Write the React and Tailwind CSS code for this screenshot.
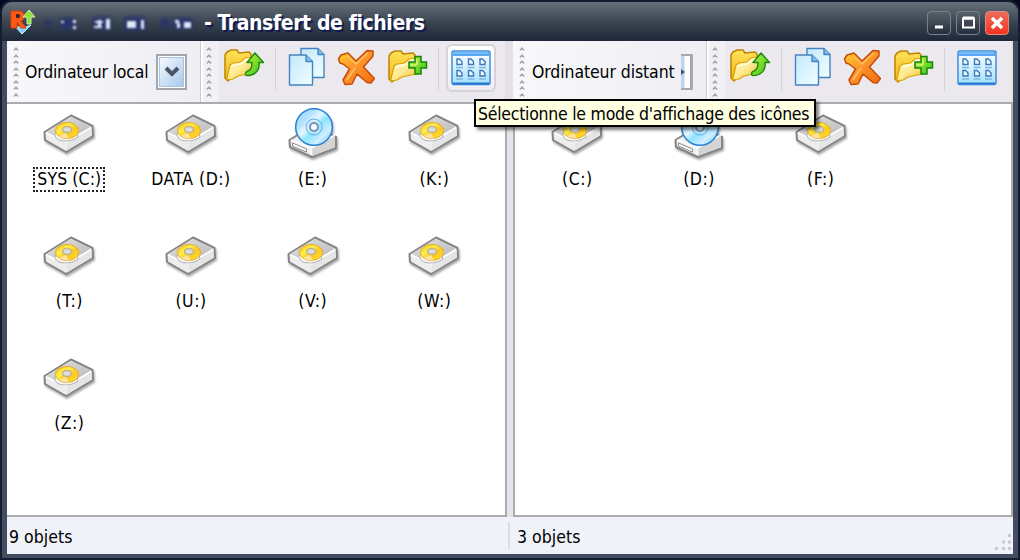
import React from 'react';

const LOCAL_DRIVES = [
    { name: 'SYS (C:)', selected: true },
    { name: 'DATA (D:)' },
    { name: '(E:)', type: 'cd' },
    { name: '(K:)' },
    { name: '(T:)' },
    { name: '(U:)' },
    { name: '(V:)' },
    { name: '(W:)' },
    { name: '(Z:)' },
];

const REMOTE_DRIVES = [
    { name: '(C:)' },
    { name: '(D:)', type: 'cd' },
    { name: '(F:)' },
];

// One set of gradients shared by all the icons
function IconDefs() {
    return (
        <svg className="absolute w-0 h-0" aria-hidden="true">
            <defs>
                <linearGradient id="folder" x1="0" y1="0" x2="1" y2="1">
                    <stop offset="0" stopColor="#fff9c0" />
                    <stop offset=".5" stopColor="#fdea94" />
                    <stop offset="1" stopColor="#f2bc14" />
                </linearGradient>
                <linearGradient id="folderBack" x1="0" y1="0" x2="0" y2="1">
                    <stop offset="0" stopColor="#ffe25c" />
                    <stop offset="1" stopColor="#f0b414" />
                </linearGradient>
                <linearGradient id="green" x1="0" y1="0" x2="1" y2="1">
                    <stop offset="0" stopColor="#b8f03c" />
                    <stop offset="1" stopColor="#3cc41c" />
                </linearGradient>
                <linearGradient id="page" x1="0" y1="0" x2="1" y2="1">
                    <stop offset="0" stopColor="#c4e8fc" />
                    <stop offset="1" stopColor="#f0ffff" />
                </linearGradient>
                <linearGradient id="cross" x1="0" y1="0" x2="1" y2="1">
                    <stop offset="0" stopColor="#ffd21e" />
                    <stop offset=".4" stopColor="#ff9a30" />
                    <stop offset="1" stopColor="#f26a10" />
                </linearGradient>
                <linearGradient id="grid" x1="0" y1="0" x2="0" y2="1">
                    <stop offset="0" stopColor="#ffffff" />
                    <stop offset="1" stopColor="#a4e0ff" />
                </linearGradient>
                <linearGradient id="disc" x1="0" y1="0" x2="1" y2="1">
                    <stop offset="0" stopColor="#8ed0fc" />
                    <stop offset=".28" stopColor="#b4e2ff" />
                    <stop offset=".42" stopColor="#e6f6ff" />
                    <stop offset=".55" stopColor="#8ce4ff" />
                    <stop offset=".75" stopColor="#d2efff" />
                    <stop offset="1" stopColor="#5cbcf8" />
                </linearGradient>
                <linearGradient id="platter" x1="0" y1="0" x2="1" y2="1">
                    <stop offset="0" stopColor="#f8b800" />
                    <stop offset=".35" stopColor="#fff04a" />
                    <stop offset=".6" stopColor="#ffc81c" />
                    <stop offset="1" stopColor="#ffe43c" />
                </linearGradient>
                <linearGradient id="metal" x1="0" y1="0" x2="1" y2="1">
                    <stop offset="0" stopColor="#e2e2e2" />
                    <stop offset="1" stopColor="#b4b4b4" />
                </linearGradient>
            </defs>
        </svg>
    );
}

function Folder() {
    return (
        <>
            <path d="M2 31V8l2-3 4-2h6l2 3 10-1 2 2v6L5 34z" fill="url(#folderBack)" stroke="#bd8502" strokeWidth="1.500" strokeLinejoin="round" />
            <path d="M3.500 33 7 18l3-2 8-1 4-4 9-1-2 16-14 3-5 3z" fill="url(#folder)" stroke="#dca000" strokeWidth="1.200" strokeLinejoin="round" />
            <path d="M8.500 19l10-2.500 4-3.500 5-1" fill="none" stroke="#fffbd8" strokeWidth="2" />
        </>
    );
}

function FolderUpIcon() {
    return (
        <svg width="42" height="38" viewBox="0 0 42 38">
            <Folder />
            <path d="M32 6 40.500 15.500H36c1 7-3 13-12 13-2 0-2-3 0-4 4-1 5-4 5-9h-5z" fill="url(#green)" stroke="#238a10" strokeWidth="1.500" strokeLinejoin="round" />
        </svg>
    );
}

function FolderPlusIcon() {
    return (
        <svg width="42" height="38" viewBox="0 0 42 38">
            <Folder />
            <path d="M28 8.500h6v5.500h5.500v6H34v6h-6v-6h-6v-6h6z" fill="url(#green)" stroke="#15860b" strokeWidth="1.500" />
            <path d="M29.500 17h-6M30 11v6" stroke="#d8f870" strokeWidth="1.500" />
        </svg>
    );
}

function CopyIcon() {
    return (
        <svg width="38" height="40" viewBox="0 0 38 40">
            <g fill="url(#page)" stroke="#4583c0" strokeWidth="1.400" strokeLinejoin="round">
                <path d="M13 1.500h17l6 6v23H13z" />
                <path d="M30 1.500v6h6" fill="#84c0ec" />
                <path d="M1.500 8h16.500l6.500 6.500V38h-23z" />
                <path d="M18 8v6.500h6.500" fill="#84c0ec" />
            </g>
        </svg>
    );
}

function DeleteIcon() {
    return (
        <svg width="38" height="38" viewBox="0 0 38 38">
            <path d="M1.500 10 4 6l7-2 8 8L30 1.500l6 .5v5L26.500 18 37.500 29.500 34 34l-4-.5L20 25l-5 10-7 .5-2-4.500 6.500-11L6 15l-3-1z" fill="url(#cross)" stroke="#c84a08" strokeWidth="1.500" strokeLinejoin="round" />
            <path d="M10 7l9 8L31 4M10 31l8-12" fill="none" stroke="#ffc060" strokeWidth="1.500" />
        </svg>
    );
}

function ViewsIcon() {
    return (
        <svg width="40" height="36" viewBox="0 0 40 36">
            <rect x="1" y="1" width="38" height="33.500" rx="2" fill="url(#grid)" stroke="#3c8cdc" strokeWidth="1.500" />
            <path d="M2 2h36v4H2z" fill="#5aa8f4" />
            <path d="M2 3h35" stroke="#90d0ff" />
            <path d="M2 33.500h36" stroke="#2878d0" strokeWidth="2" />
            {[[6, 9], [17.500, 9], [29, 9], [6, 20.500], [17.500, 20.500], [29, 20.500]].map(([x, y]) => (
                <g key={`${x}-${y}`} fill="#eef8ff" stroke="#3c78b8" strokeWidth="1.400">
                    <path d={`M${x} ${y}h2.500l2.500 2.500v3h-5z`} />
                    <path d={`M${x - 1} ${y + 8.500}h7`} stroke="#80b4dc" />
                </g>
            ))}
        </svg>
    );
}

function HardDiskIcon() {
    return (
        <svg width="54" height="44" viewBox="0 0 54 44" className="drop-shadow-[1px_2px_1px_rgba(0,0,0,0.35)]">
            <path d="M1.500 19 28 2.500 49.500 13 50 23 23 39 2 27z" fill="#ededed" stroke="#858585" strokeWidth="2" strokeLinejoin="round" />
            <path d="M3 19 28 4l20 10-25 15z" fill="url(#metal)" />
            <path d="M24 29v8.500L48.500 22.500V14.500z" fill="#e5e5e5" />
            <path d="M3 20l20.500 9L48 14.500" fill="none" stroke="#fff" strokeWidth="1.500" />
            <path d="M12 23c2 6 15 7 23 1l-1-4-22 0z" fill="#f6f6f6" stroke="#b0b0b0" />
            <ellipse cx="24" cy="17.500" rx="11.500" ry="8" fill="url(#platter)" stroke="#e49c10" strokeWidth=".8" />
            <path d="M16 23l7-3 3 5.500c-4 0-8-1-10-2.500z" fill="#ffe4a8" />
            <ellipse cx="24" cy="16.500" rx="4.500" ry="3" fill="#dcdcdc" stroke="#c0b48c" strokeWidth="1.500" />
        </svg>
    );
}

function CdDriveIcon() {
    return (
        <svg width="54" height="54" viewBox="0 0 54 54" className="drop-shadow-[1px_2px_1px_rgba(0,0,0,0.35)]">
            <path d="M2.500 33 25 19l24 11v11L25 50 3 40z" fill="#efefef" stroke="#858585" strokeWidth="2" strokeLinejoin="round" />
            <path d="M25 40 48 29v11L25 49z" fill="#d4d4d4" />
            <path d="M4 33l20.500 8L48 28M24.500 41v7" fill="none" stroke="#fff" strokeWidth="1.500" />
            <path d="M5.500 36l14 6v3l-14-6z" fill="#fff" stroke="#8d8d8d" />
            <circle cx="27" cy="20" r="18.300" fill="url(#disc)" stroke="#2a82d4" strokeWidth="1.500" />
            <circle cx="27" cy="20" r="8" fill="#c2e6ff" fillOpacity=".5" stroke="#64aee4" />
            <circle cx="27" cy="20" r="4" fill="#f6fbff" stroke="#7896b4" strokeWidth="2" />
        </svg>
    );
}

function AppIcon() {
    return (
        <svg width="28" height="28" viewBox="0 0 28 28">
            <path d="M6 17l5 2h7l5-2-9 9z" fill="#7ed4ff" stroke="#c8efff" />
            <path d="M3 20V3h7c8 0 8 8 3 10l5 7h-5l-4-6v6z" fill="#ff5a14" stroke="#e03c08" strokeWidth="1" />
            <path d="M8 6h2c3 0 3 4 0 4H8z" fill="#3a2830" />
            <path d="M21 2l6 7h-4v7h-4V9h-4z" fill="#8ee03c" stroke="#c8f8a0" />
        </svg>
    );
}

function Grip() {
    return (
        <div className="flex w-3 shrink-0 flex-col items-center gap-[2.500px]">
            {[0, 1, 2, 3, 4, 5, 6, 7].map((i) => (
                <svg key={i} width="6" height="4" viewBox="0 0 6 4">
                    <path d="M.8 3.500 3 1l2.200 2.500" fill="none" stroke="#a6a6aa" strokeWidth="1.200" />
                </svg>
            ))}
        </div>
    );
}

function Separator() {
    return <div className="h-[43px] w-px shrink-0 bg-[#d3d1d8]" />;
}

function ToolBar({ label, remote }) {
    return (
        <div className="flex h-[61px] w-[506px] shrink-0 items-start bg-[#e3e1e6]">
            <div className="flex h-[61px] w-[194px] shrink-0 items-start border-r border-[#cccad2] bg-gradient-to-r from-[#f8f8fa] to-[#efeef3]">
                <div className="pt-[6px] pl-[3px]"><Grip /></div>
                <div className={remote ? 'w-[153px] pt-[19px] pl-[4px]' : 'w-[135px] pt-[19px] pl-[3px]'}>
                    <span className={remote ? 'whitespace-nowrap tracking-[-0.1px]' : 'whitespace-nowrap tracking-[-0.2px]'}>{label}</span>
                </div>
                {remote ? (
                    <div className="mt-[13px] flex h-[36px] w-[12px] shrink-0 items-center border-y-2 border-r-[3px] border-[#a4a8b0] bg-gradient-to-r from-[#bfd4ee] from-30% to-white to-50%">
                        <svg width="4" height="8" viewBox="0 0 4 8"><path d="M0 1l4 3-4 3z" fill="#455365" /></svg>
                    </div>
                ) : (
                    <div className="mt-[13px] ml-[-1px] h-[36px] w-[31px] border-2 border-[#a1a5ad] bg-white p-px">
                        <div className="flex h-full items-center justify-center border border-[#a9c4e2] bg-gradient-to-br from-[#f6faff] to-[#a9c8ec]">
                            <svg width="16" height="12" viewBox="0 0 16 12"><path d="M2 2l6 6 6-6" fill="none" stroke="#4a5668" strokeWidth="4" /></svg>
                        </div>
                    </div>
                )}
            </div>
            <div className="flex h-full w-[18px] shrink-0 border-l-2 border-white bg-[#f1f0f4] pt-[6px]"><Grip /></div>
            <div className="flex h-[61px] w-[286px] items-start bg-[#ebe9ee]">
                <button className="mt-[6px] ml-[4px]"><FolderUpIcon /></button>
                <div className="mt-[7px] ml-[10px]"><Separator /></div>
                <button className="mt-[6px] ml-[12px]"><CopyIcon /></button>
                <button className="mt-[8px] ml-[11px]"><DeleteIcon /></button>
                <button className="mt-[7px] ml-[12px]"><FolderPlusIcon /></button>
                <div className="mt-[7px] ml-[9px]"><Separator /></div>
                <button className={remote
                    ? 'mt-[3px] ml-[7px] flex h-[48px] w-[50px] shrink-0 items-center justify-center'
                    : 'mt-[3px] ml-[7px] flex h-[48px] w-[50px] shrink-0 items-center justify-center rounded-md border-2 border-[#d5d3d9] bg-gradient-to-b from-white to-[#eeecf1]'}
                >
                    <ViewsIcon />
                </button>
            </div>
        </div>
    );
}

function DrivePane({ drives }) {
    return (
        <div className="grid h-[415px] w-[500px] auto-rows-[122px] grid-cols-[repeat(4,121.700px)] border-t-2 border-r-2 border-b-2 border-[#acacaf] bg-white">
            {drives.map((d) => (
                <div key={d.name} className="flex flex-col items-center pl-[3px]">
                    <div className={d.type === 'cd' ? 'flex h-[63px] items-start pt-[3px] pl-[2px]' : 'flex h-[63px] items-start pt-[9px] pl-[2px]'}>
                        {d.type === 'cd' ? <CdDriveIcon /> : <HardDiskIcon />}
                    </div>
                    <span className={d.selected
                        ? 'h-[25px] w-[72px] border-2 border-dotted border-[#222] text-center leading-[21px] whitespace-nowrap tracking-[0.1px]'
                        : 'h-[25px] leading-[25px] whitespace-nowrap tracking-[0.5px]'}
                    >
                        {d.name}
                    </span>
                </div>
            ))}
        </div>
    );
}

function WindowButton({ close, children }) {
    return (
        <button className={close
            ? 'flex h-[24px] w-[24px] items-center justify-center rounded border border-[#db8b82] bg-gradient-to-b from-[#ee6a59] to-[#f2321c]'
            : 'flex h-[24px] w-[24px] items-center justify-center rounded border border-[#7b8188] bg-gradient-to-b from-[#59616a] to-[#252e3c]'}
        >
            <svg width="16" height="16" viewBox="0 0 16 16" fill="none" stroke="#fff">{children}</svg>
        </button>
    );
}

function TitleBar() {
    return (
        <div className="flex h-[39px] shrink-0 items-start bg-gradient-to-b from-[#67717b] via-[#38424f] via-55% to-[#1e2839] pt-[6px] pr-[9px] pl-[6px]">
            <AppIcon />
            {/* masked host name */}
            <svg width="160" height="30" viewBox="0 0 160 30" className="ml-[7px]">
                <g fill="#27356c" className="blur-[2px]">
                    <path d="M2 12h7v7H2zM17 10h15v11H17zM50 9h18v12H50zM81 9h22v13H81zM118 10h8v9h-8zM130 10h20v11h-20z" />
                </g>
                <g fill="#e4eaf8" className="blur-[.8px]">
                    <path d="M18 13h3v2h-3zM30 12h3v3h-3zM30 18h3v3h-3zM52 13h8v2h-8zM51 18h8v2h-8zM55 12h3v8h-3zM63 11h4v10h-4zM84 13h9v7h-9zM98 12h3v9h-3zM132 12h4v3h-4zM134 15h3v5h-3zM141 14h7v6h-7z" />
                </g>
            </svg>
            <span className="pt-px pl-px text-[21px] leading-[28px] font-bold whitespace-nowrap tracking-[-0.4px] text-white [text-shadow:2px_2px_1px_#10194f]">
                - Transfert de fichiers
            </span>
            <div className="ml-auto flex gap-[5px] pt-[3px]">
                <WindowButton><path d="M4 12h8" strokeWidth="3" /></WindowButton>
                <WindowButton><path d="M3 3.500h11v9H3z" strokeWidth="2" /><path d="M3 3h11" strokeWidth="3" /></WindowButton>
                <WindowButton close><path d="M3 3l10 10M13 3 3 13" strokeWidth="3.500" /></WindowButton>
            </div>
        </div>
    );
}

export default function App() {
    return (
        <div className="relative h-[560px] w-[1020px] overflow-hidden bg-[#08091f] font-['DejaVu_Sans_Condensed','DejaVu_Sans',sans-serif] text-[17.500px] leading-[24px] text-black [font-stretch:condensed]">
            <IconDefs />
            <div className="flex h-full flex-col overflow-hidden rounded-t-xl border-2 border-[#151d30] bg-[#253047]">
                <TitleBar />
                <div className="flex flex-col border-x-[5px] border-b-4 border-[#424d61]">
                    <div className="flex h-[61px] overflow-hidden">
                        <ToolBar label="Ordinateur local" />
                        <ToolBar label="Ordinateur distant" remote />
                    </div>
                    <div className="flex h-[415px] gap-[6px] bg-[#e6e4ea]">
                        <DrivePane drives={LOCAL_DRIVES} />
                        <div className="w-[500px] overflow-hidden border-x-2 border-[#acacaf]">
                            <DrivePane drives={REMOTE_DRIVES} />
                        </div>
                    </div>
                    <div className="flex h-[37px] items-center bg-[#eff2f8]">
                        <div className="h-[27px] w-[503px] border-r-2 border-[#dcdce1] pl-[2px] leading-[31px] tracking-[0.05px]">9 objets</div>
                        <div className="h-[27px] flex-1 pl-[7px] leading-[31px] tracking-[0.05px]">3 objets</div>
                        <svg width="18" height="18" viewBox="0 0 18 18" className="mt-[14px]" fill="#c9c9cf">
                            <path d="M13 0h3v3h-3zM7 6.500h3v3H7zM13 6.500h3v3h-3zM0 13h3v3H0zM7 13h3v3H7zM13 13h3v3h-3z" />
                        </svg>
                    </div>
                </div>
            </div>
            <div className="absolute top-[99px] left-[474px] h-[28px] w-[342px] border-2 border-black bg-[#ffffe1] pl-[2px] leading-[26px] whitespace-nowrap tracking-[-0.25px] shadow-[3px_3px_3px_rgba(0,0,0,0.5)]">
                Sélectionne le mode d'affichage des icônes
            </div>
        </div>
    );
}
